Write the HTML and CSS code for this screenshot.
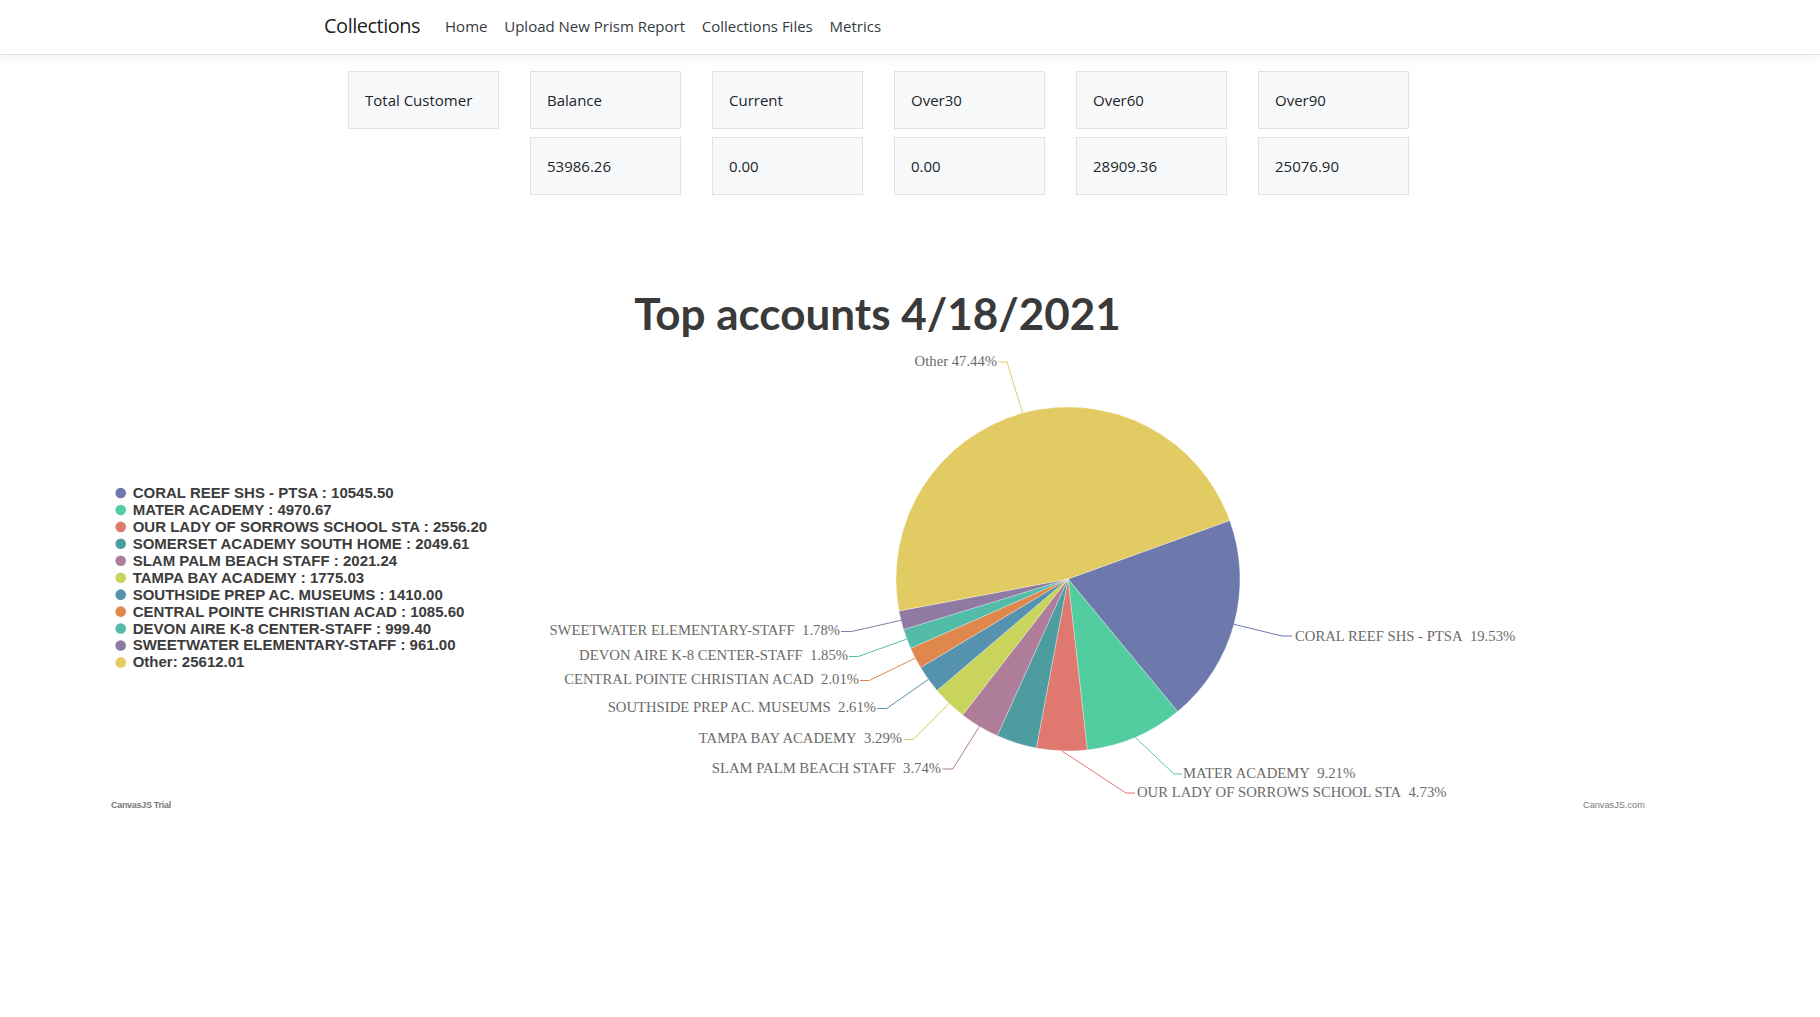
FILE: index.html
```html
<!DOCTYPE html>
<html lang="en">
<head>
<meta charset="utf-8">
<title>Collections</title>
<link rel="stylesheet" href="styles.css">
</head>
<body>
<nav class="navbar">
  <div class="nav-inner">
    <a class="brand" href="#">Collections</a>
    <ul class="nav-links">
      <li><a href="#">Home</a></li>
      <li><a href="#">Upload New Prism Report</a></li>
      <li><a href="#">Collections Files</a></li>
      <li><a href="#">Metrics</a></li>
    </ul>
  </div>
</nav>
<main class="content">
  <div class="cards">
    <div class="card">Total Customer</div>
    <div class="card">Balance</div>
    <div class="card">Current</div>
    <div class="card">Over30</div>
    <div class="card">Over60</div>
    <div class="card">Over90</div>
    <div class="card-empty"></div>
    <div class="card">53986.26</div>
    <div class="card">0.00</div>
    <div class="card">0.00</div>
    <div class="card">28909.36</div>
    <div class="card">25076.90</div>
  </div>
  <div class="chart">
    <svg class="chart-svg" width="1820" height="630" viewBox="0 195 1820 630" xmlns="http://www.w3.org/2000/svg">
      <text class="chart-title" x="877.5" y="330" text-anchor="middle">Top accounts 4/18/2021</text>

      <g class="pie">
        <path fill="#6D78AD" d="M1068 579 L1229.73 520.45 A172 172 0 0 1 1177.6 711.55 Z"/>
        <path fill="#51CDA0" d="M1068 579 L1177.6 711.55 A172 172 0 0 1 1087.27 749.92 Z"/>
        <path fill="#DF7970" d="M1068 579 L1087.27 749.92 A172 172 0 0 1 1036.32 748.06 Z"/>
        <path fill="#4C9CA0" d="M1068 579 L1036.32 748.06 A172 172 0 0 1 997.26 735.78 Z"/>
        <path fill="#AE7D99" d="M1068 579 L997.26 735.78 A172 172 0 0 1 962.67 714.98 Z"/>
        <path fill="#C9D45C" d="M1068 579 L962.67 714.98 A172 172 0 0 1 937.03 690.49 Z"/>
        <path fill="#5592AD" d="M1068 579 L937.03 690.49 A172 172 0 0 1 920.57 667.59 Z"/>
        <path fill="#DF874D" d="M1068 579 L920.57 667.59 A172 172 0 0 1 910.58 648.31 Z"/>
        <path fill="#52BCA8" d="M1068 579 L910.58 648.31 A172 172 0 0 1 903.6 629.57 Z"/>
        <path fill="#8E7AA3" d="M1068 579 L903.6 629.57 A172 172 0 0 1 898.99 610.91 Z"/>
        <path fill="#E3CB64" d="M1068 579 L898.99 610.91 A172 172 0 0 1 1229.73 520.45 Z"/>
      </g>

      <g class="idx-lines">
        <polyline stroke="#E3CB64" points="1022.6,413.1 1007,362 998,362"/>
        <polyline stroke="#6D78AD" points="1233.9,624.3 1282,636 1292,636"/>
        <polyline stroke="#51CDA0" points="1135.2,737.3 1174,774 1182,774"/>
        <polyline stroke="#DF7970" points="1061.7,750.9 1126,793 1135,793"/>
        <polyline stroke="#AE7D99" points="979.4,726.4 952.7,769 942.5,769"/>
        <polyline stroke="#C9D45C" points="949.2,703.4 913.3,739.5 903.5,739.5"/>
        <polyline stroke="#5592AD" points="928.3,679.4 886.7,708.5 877,708.5"/>
        <polyline stroke="#DF874D" points="915.3,658.1 869.3,680.5 860,680.5"/>
        <polyline stroke="#52BCA8" points="906.8,639 858.3,656.5 849,656.5"/>
        <polyline stroke="#8E7AA3" points="901,620.3 851.7,631.5 841,631.5"/>
      </g>

      <g class="idx-labels">
        <text x="997" y="366" text-anchor="end">Other 47.44%</text>
        <text x="1295" y="640.5">CORAL REEF SHS - PTSA&#160; 19.53%</text>
        <text x="1183" y="777.5">MATER ACADEMY&#160; 9.21%</text>
        <text x="1137" y="797">OUR LADY OF SORROWS SCHOOL STA&#160; 4.73%</text>
        <text x="941" y="772.5" text-anchor="end">SLAM PALM BEACH STAFF&#160; 3.74%</text>
        <text x="902" y="742.5" text-anchor="end">TAMPA BAY ACADEMY&#160; 3.29%</text>
        <text x="876" y="712" text-anchor="end">SOUTHSIDE PREP AC. MUSEUMS&#160; 2.61%</text>
        <text x="859" y="684" text-anchor="end">CENTRAL POINTE CHRISTIAN ACAD&#160; 2.01%</text>
        <text x="848" y="660" text-anchor="end">DEVON AIRE K-8 CENTER-STAFF&#160; 1.85%</text>
        <text x="840" y="635" text-anchor="end">SWEETWATER ELEMENTARY-STAFF&#160; 1.78%</text>
      </g>

      <g class="legend">
        <circle cx="120.7" cy="493" r="5.3" fill="#6D78AD"/>
        <text x="132.7" y="498">CORAL REEF SHS - PTSA : 10545.50</text>
        <circle cx="120.7" cy="509.94" r="5.3" fill="#51CDA0"/>
        <text x="132.7" y="514.94">MATER ACADEMY : 4970.67</text>
        <circle cx="120.7" cy="526.88" r="5.3" fill="#DF7970"/>
        <text x="132.7" y="531.88">OUR LADY OF SORROWS SCHOOL STA : 2556.20</text>
        <circle cx="120.7" cy="543.82" r="5.3" fill="#4C9CA0"/>
        <text x="132.7" y="548.82">SOMERSET ACADEMY SOUTH HOME : 2049.61</text>
        <circle cx="120.7" cy="560.76" r="5.3" fill="#AE7D99"/>
        <text x="132.7" y="565.76">SLAM PALM BEACH STAFF : 2021.24</text>
        <circle cx="120.7" cy="577.7" r="5.3" fill="#C9D45C"/>
        <text x="132.7" y="582.7">TAMPA BAY ACADEMY : 1775.03</text>
        <circle cx="120.7" cy="594.64" r="5.3" fill="#5592AD"/>
        <text x="132.7" y="599.64">SOUTHSIDE PREP AC. MUSEUMS : 1410.00</text>
        <circle cx="120.7" cy="611.58" r="5.3" fill="#DF874D"/>
        <text x="132.7" y="616.58">CENTRAL POINTE CHRISTIAN ACAD : 1085.60</text>
        <circle cx="120.7" cy="628.52" r="5.3" fill="#52BCA8"/>
        <text x="132.7" y="633.52">DEVON AIRE K-8 CENTER-STAFF : 999.40</text>
        <circle cx="120.7" cy="645.46" r="5.3" fill="#8E7AA3"/>
        <text x="132.7" y="650.46">SWEETWATER ELEMENTARY-STAFF : 961.00</text>
        <circle cx="120.7" cy="662.4" r="5.3" fill="#E3CB64"/>
        <text x="132.7" y="667.4">Other: 25612.01</text>
      </g>

      <text class="credit-trial" x="111" y="807.5">CanvasJS Trial</text>
      <text class="credit-link" x="1583" y="807.5">CanvasJS.com</text>
    </svg>
  </div>
</main>
</body>
</html>
```
FILE: styles.css
```css
html, body {
  margin: 0;
  padding: 0;
  background: #ffffff;
}

body {
  font-family: "Open Sans", "Noto Sans", sans-serif;
  font-size: 15px;
  color: #212529;
}

a {
  text-decoration: none;
}

.navbar {
  box-sizing: border-box;
  height: 55px;
  border-bottom: 1px solid #dee2e6;
  box-shadow: 0 4px 12px rgba(0, 0, 0, 0.05);
  background: #ffffff;
}

.nav-inner {
  box-sizing: border-box;
  height: 100%;
  display: flex;
  align-items: center;
  padding-left: 324px;
  padding-bottom: 3px;
}

.brand {
  font-size: 20px;
  letter-spacing: -0.5px;
  color: rgba(0, 0, 0, 0.9);
  margin-right: 16px;
}

.nav-links {
  list-style: none;
  margin: 0;
  padding: 0;
  display: flex;
  align-items: center;
}

.nav-links a {
  display: block;
  padding: 0 8.4px;
  font-size: 15px;
  color: #343a40;
}

.nav-links li:first-child a {
  padding-left: 9px;
}

.content {
  padding-top: 16px;
}

.cards {
  display: grid;
  grid-template-columns: repeat(6, 151px);
  column-gap: 31px;
  row-gap: 8px;
  margin-left: 348px;
}

.card {
  box-sizing: border-box;
  height: 58px;
  display: flex;
  align-items: center;
  padding-left: 16px;
  background: #f8f9fa;
  border: 1px solid #dee2e6;
  color: #212529;
}

.card-empty {
  height: 58px;
}

.chart {
  display: block;
}

.chart-svg {
  display: block;
}

.chart-title {
  font-family: "Lato", "Liberation Sans", sans-serif;
  font-weight: 700;
  font-size: 44px;
  fill: #3a3a3a;
}

.pie path {
  stroke: #ffffff;
  stroke-width: 0.6;
  stroke-opacity: 0.5;
}

.idx-lines polyline {
  fill: none;
  stroke-width: 1;
}

.idx-labels text {
  font-family: "Liberation Serif", "Times New Roman", serif;
  font-size: 14.7px;
  fill: #6a6a6a;
}

.legend text {
  font-family: "Liberation Sans", Arial, sans-serif;
  font-weight: 700;
  font-size: 15px;
  fill: #3c3c3c;
}

.credit-trial {
  font-family: "Liberation Sans", Arial, sans-serif;
  font-weight: 700;
  font-size: 9px;
  letter-spacing: -0.3px;
  fill: #7a7a7a;
}

.credit-link {
  font-family: "Liberation Sans", Arial, sans-serif;
  font-size: 9.2px;
  fill: #777777;
}
```
